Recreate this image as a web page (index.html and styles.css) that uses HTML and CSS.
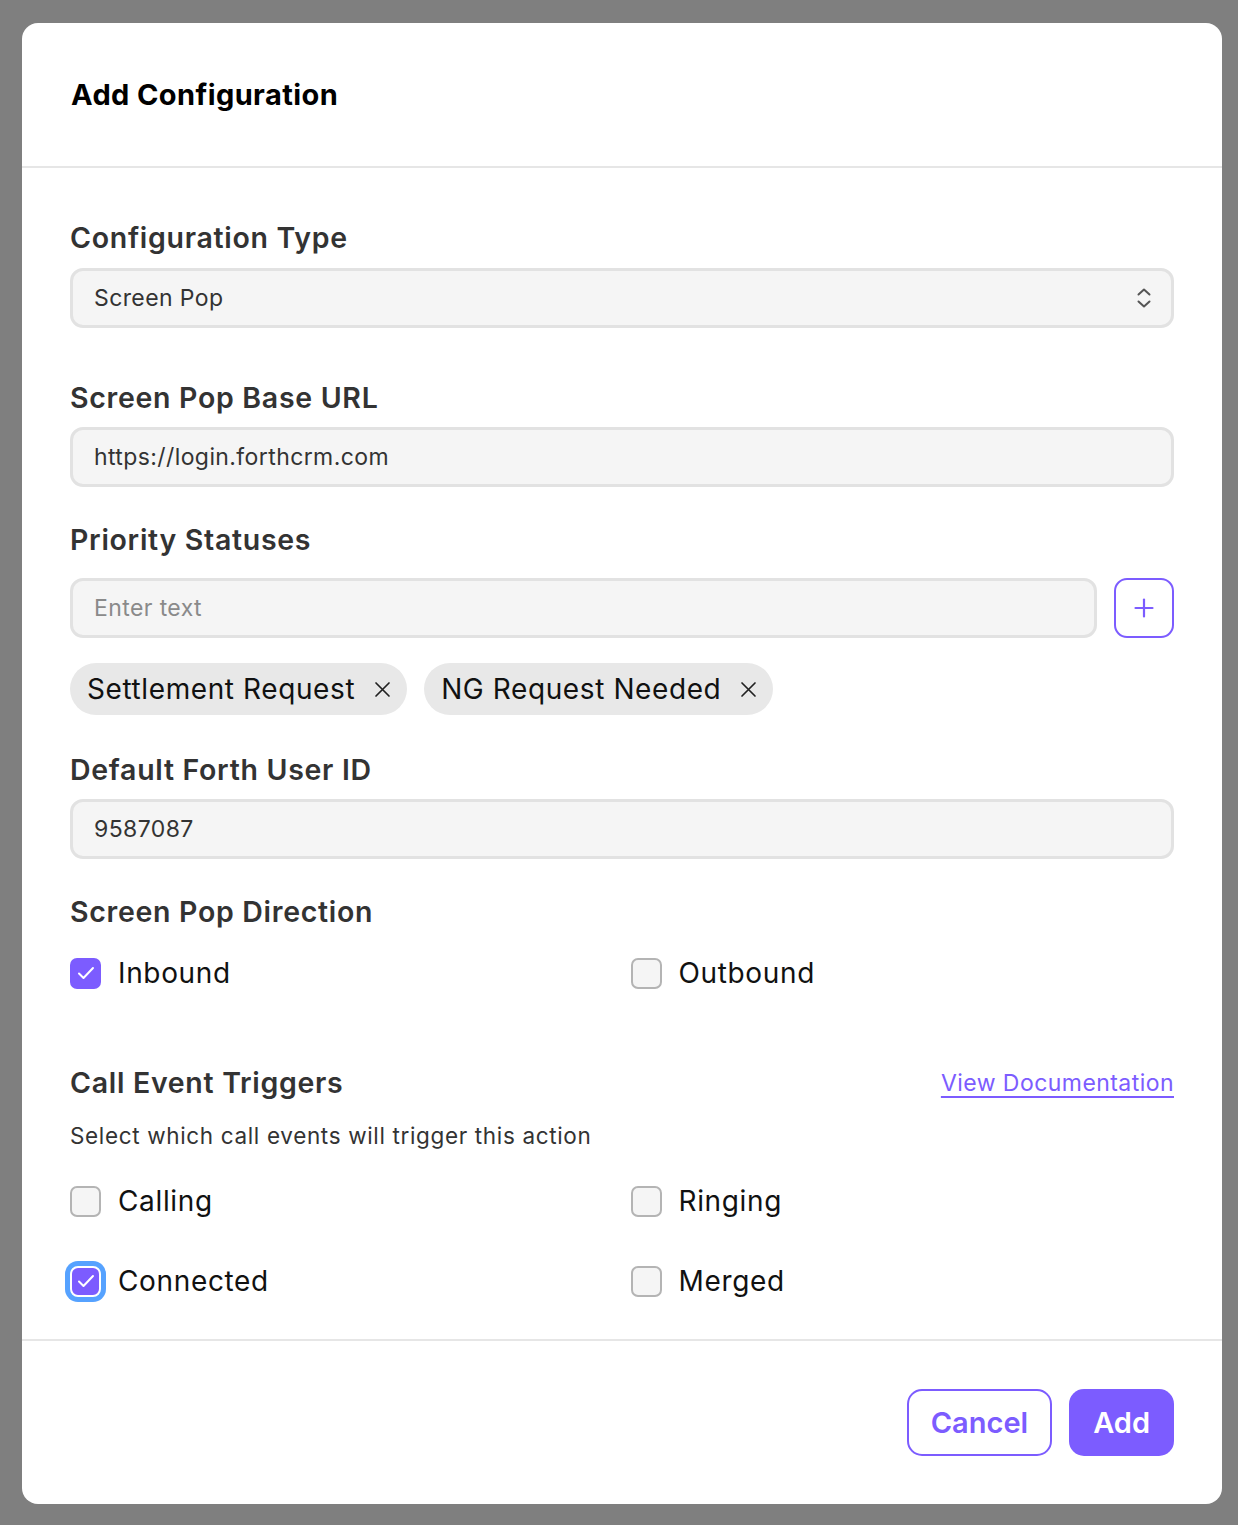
FILE: index.html
```html
<!DOCTYPE html>
<html lang="en">
<head>
<meta charset="utf-8">
<title>Add Configuration</title>
<link rel="stylesheet" href="styles.css">
</head>
<body>
<div class="backdrop">
  <div class="modal">
    <header class="modal-header">
      <h1 class="modal-title">Add Configuration</h1>
    </header>

    <div class="modal-body">
      <label class="field-label lbl-type">Configuration Type</label>
      <div class="control select mt-12">
        <span>Screen Pop</span>
        <svg class="chevrons" width="18" height="24" viewBox="0 0 18 24" fill="none" stroke="#555" stroke-width="2" stroke-linecap="round" stroke-linejoin="round">
          <path d="M3.5 8.5 L9 3.5 L14.5 8.5"/>
          <path d="M3.5 15.5 L9 20.5 L14.5 15.5"/>
        </svg>
      </div>

      <label class="field-label lbl-url">Screen Pop Base URL</label>
      <div class="control mt-11"><span>https://login.forthcrm.com</span></div>

      <label class="field-label lbl-priority">Priority Statuses</label>
      <div class="input-row">
        <div class="control grow"><span class="placeholder">Enter text</span></div>
        <button class="icon-btn" type="button" aria-label="Add status">
          <svg width="22" height="22" viewBox="0 0 22 22" fill="none" stroke="#7c5cff" stroke-width="2.2" stroke-linecap="round">
            <path d="M11 2.5 V19.5"/>
            <path d="M2.5 11 H19.5"/>
          </svg>
        </button>
      </div>

      <div class="chips">
        <span class="chip">Settlement Request
          <svg class="chip-x" width="17" height="17" viewBox="0 0 17 17" stroke="#222" stroke-width="1.7" stroke-linecap="round"><path d="M2 2 L15 15 M15 2 L2 15"/></svg>
        </span>
        <span class="chip">NG Request Needed
          <svg class="chip-x" width="17" height="17" viewBox="0 0 17 17" stroke="#222" stroke-width="1.7" stroke-linecap="round"><path d="M2 2 L15 15 M15 2 L2 15"/></svg>
        </span>
      </div>

      <label class="field-label lbl-user">Default Forth User ID</label>
      <div class="control mt-11"><span>9587087</span></div>

      <label class="field-label lbl-direction">Screen Pop Direction</label>
      <div class="check-grid mt-25">
        <label class="check"><span class="box checked"><svg width="18" height="14" viewBox="0 0 18 14" fill="none" stroke="#fff" stroke-width="2" stroke-linecap="round" stroke-linejoin="round"><path d="M2 7.5 L6.5 12 L16 2"/></svg></span>Inbound</label>
        <label class="check"><span class="box"></span>Outbound</label>
      </div>

      <div class="section-head">
        <span class="field-label">Call Event Triggers</span>
        <a class="doc-link" href="#">View Documentation</a>
      </div>
      <p class="hint">Select which call events will trigger this action</p>

      <div class="check-grid triggers">
        <label class="check"><span class="box"></span>Calling</label>
        <label class="check"><span class="box"></span>Ringing</label>
        <label class="check"><span class="box checked focused"><svg width="18" height="14" viewBox="0 0 18 14" fill="none" stroke="#fff" stroke-width="2" stroke-linecap="round" stroke-linejoin="round"><path d="M2 7.5 L6.5 12 L16 2"/></svg></span>Connected</label>
        <label class="check"><span class="box"></span>Merged</label>
      </div>
    </div>

    <footer class="modal-footer">
      <button class="btn btn-outline" type="button">Cancel</button>
      <button class="btn btn-primary" type="button">Add</button>
    </footer>
  </div>
</div>
</body>
</html>
```

FILE: styles.css
```css
* {
  box-sizing: border-box;
}

html, body {
  margin: 0;
  padding: 0;
}

body {
  font-family: Inter, "Noto Sans", "Liberation Sans", sans-serif;
  background: #7f7f7f;
  color: #111;
}

.backdrop {
  padding: 23px 16px 20px 22px;
  min-height: 1525px;
}

.modal {
  width: 1200px;
  background: #fff;
  border-radius: 16px;
  overflow: hidden;
}

.modal-header {
  height: 145px;
  border-bottom: 2px solid #e6e6e6;
  padding: 0 49px;
  display: flex;
  align-items: center;
}

.modal-title {
  margin: 0;
  font-size: 29px;
  font-weight: 700;
  color: #000;
  letter-spacing: 0.4px;
}

.modal-body {
  padding: 52px 48px 40px;
  display: flex;
  flex-direction: column;
}

.field-label {
  display: block;
  font-size: 28.5px;
  line-height: 36px;
  font-weight: 600;
  color: #333;
  letter-spacing: 0.7px;
}

.lbl-url { margin-top: 52px; }
.lbl-priority { margin-top: 35px; }
.lbl-user { margin-top: 37px; }
.lbl-direction { margin-top: 35px; }

.mt-11 { margin-top: 11px; }
.mt-12 { margin-top: 12px; }
.mt-25 { margin-top: 25px; }

.control {
  height: 60px;
  border: 3px solid #e2e2e2;
  background: #f5f5f5;
  border-radius: 13px;
  display: flex;
  align-items: center;
  padding: 0 21px;
  font-size: 23px;
  letter-spacing: 0.4px;
  color: #333;
}

.select {
  justify-content: space-between;
  padding-right: 18px;
}

.placeholder {
  color: #8a8a8a;
}

.input-row {
  margin-top: 20px;
  display: flex;
  gap: 17px;
}

.grow {
  flex: 1;
}

.icon-btn {
  width: 60px;
  height: 60px;
  border: 2px solid #7c5cff;
  border-radius: 13px;
  background: #fff;
  display: flex;
  align-items: center;
  justify-content: center;
  padding: 0;
}

.chips {
  margin-top: 25px;
  display: flex;
  gap: 17px;
}

.chip {
  height: 52px;
  border-radius: 26px;
  background: #e8e8e8;
  display: inline-flex;
  align-items: center;
  gap: 19px;
  padding: 0 16px 0 17px;
  font-size: 28px;
  letter-spacing: 0.6px;
  color: #111;
}

.chip-x {
  flex: none;
}

.check-grid {
  display: grid;
  grid-template-columns: 1fr 1fr;
  column-gap: 17px;
}

.check {
  display: flex;
  align-items: center;
  gap: 17px;
  height: 36px;
  font-size: 28px;
  letter-spacing: 0.65px;
  color: #111;
}

.box {
  width: 31px;
  height: 31px;
  border: 2.5px solid #b4b4b4;
  background: #f5f5f5;
  border-radius: 7px;
  display: inline-flex;
  align-items: center;
  justify-content: center;
  flex: none;
}

.box.checked {
  background: #7c5cff;
  border: none;
}

.box.focused {
  border: 2px solid #fff;
  border-radius: 8px;
  box-shadow: 0 0 0 5px #56a2ff;
}

.section-head {
  margin-top: 74px;
  display: flex;
  justify-content: space-between;
  align-items: center;
}

.doc-link {
  font-size: 23px;
  letter-spacing: 0.45px;
  color: #7c5cff;
  text-decoration: underline;
  text-decoration-thickness: 1.5px;
  text-underline-offset: 5px;
}

.hint {
  margin: 20px 0 0;
  font-size: 22.5px;
  line-height: 30px;
  letter-spacing: 0.65px;
  color: #333;
}

.triggers {
  margin-top: 32px;
  row-gap: 44px;
}

.modal-footer {
  border-top: 2px solid #e6e6e6;
  padding: 48px 48px 48px;
  display: flex;
  justify-content: flex-end;
  gap: 17px;
}

.btn {
  height: 67px;
  border-radius: 15px;
  font-family: inherit;
  font-size: 29px;
  font-weight: 600;
  padding: 0 23px;
}

.btn-outline {
  background: #fff;
  border: 2px solid #7c5cff;
  color: #7c5cff;
  padding: 0 22px;
}

.btn-primary {
  background: #7c5cff;
  border: none;
  color: #fff;
  padding: 0 24px;
}
```
